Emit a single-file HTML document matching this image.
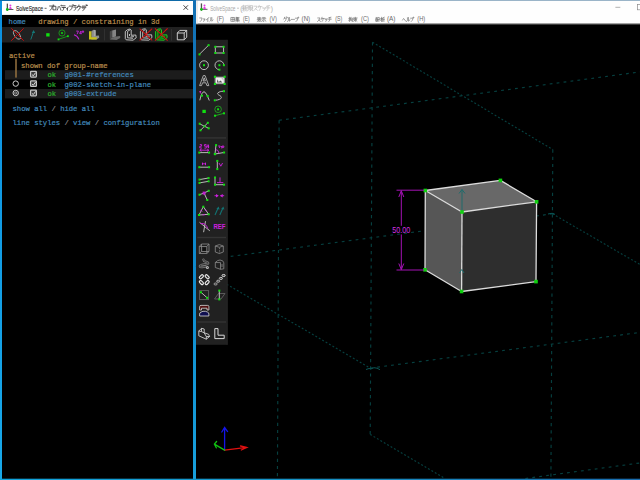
<!DOCTYPE html>
<html><head><meta charset="utf-8">
<style>
html,body{margin:0;padding:0;width:640px;height:480px;overflow:hidden;background:#000;}
body{position:relative;font-family:"Liberation Sans",sans-serif;}
.a{position:absolute;}
svg{position:absolute;left:0;top:0;}
</style></head><body>
<svg width="640" height="480" viewBox="0 0 640 480">
<defs>
<linearGradient id="bstrip" x1="0" y1="0" x2="0" y2="1">
  <stop offset="0" stop-color="#1370b4"/><stop offset="0.5" stop-color="#0d88cc"/><stop offset="1" stop-color="#18a0dc"/>
</linearGradient>
<linearGradient id="lstrip" x1="0" y1="0" x2="0" y2="1">
  <stop offset="0" stop-color="#0c90e0"/><stop offset="1" stop-color="#18a8e8"/>
</linearGradient>
<linearGradient id="botstrip" x1="0" y1="0" x2="1" y2="0">
  <stop offset="0" stop-color="#12a4dc"/><stop offset="0.5" stop-color="#1890c2"/><stop offset="1" stop-color="#1a6cae"/>
</linearGradient>
</defs>
<!-- ============ window chrome ============ -->
<rect x="0" y="0" width="640" height="480" fill="#000"/>
<rect x="0" y="0" width="2" height="480" fill="url(#lstrip)"/>
<rect x="0" y="0" width="193" height="1" fill="#0e6aa8"/>
<rect x="2" y="1" width="191" height="13" fill="#fff"/>
<rect x="2" y="14" width="191" height="1" fill="#e8e8e8"/>
<rect x="193" y="0" width="3" height="480" fill="url(#bstrip)"/>
<rect x="196" y="0" width="444" height="1" fill="#9ab4c8"/>
<rect x="196" y="1" width="444" height="22.5" fill="#fefefe"/>
<rect x="196" y="1" width="2" height="22.5" fill="#ececec"/>
<rect x="196" y="23.5" width="444" height="0.8" fill="#c8c8c8"/>

<!-- left title -->
<g id="ssicon">
  <rect x="6.7" y="3.6" width="1.3" height="7.3" fill="#505050"/>
  <rect x="7" y="9" width="6.4" height="1" fill="#585858"/>
  <circle cx="10.4" cy="5.6" r="1" fill="#e040e0"/>
  <path d="M9.1 9.1 L9.6 7.3 Q10.4 6.3 11.2 7.3 L11.8 9.1 Z" fill="#e040e0"/>
  <circle cx="7.35" cy="9.5" r="1.4" fill="#10c010"/>
</g>
<text x="16" y="10.9" font-family="Liberation Sans" font-size="6.8" fill="#202020" stroke="#202020" stroke-width="0.12" textLength="27" lengthAdjust="spacingAndGlyphs">SolveSpace</text>
<path d="M44.6 8.3 H46.6" stroke="#404040" stroke-width="0.8"/>
<g stroke="#303030" stroke-width="0.8" fill="none" stroke-linecap="round">
  <path d="M49.6 6 H52.4 Q52 8.8 50.2 10.4"/><circle cx="53.2" cy="5.3" r="0.6" stroke-width="0.5"/>
  <path d="M53.3 6.3 H55.9 V9.9 H53.3 Z"/>
  <path d="M58.3 6.6 Q58 9 57.2 10.3 M59.6 6.6 Q60.5 8.5 61 10.3"/><circle cx="61.3" cy="5.6" r="0.6" stroke-width="0.5"/>
  <path d="M62.6 5.8 H65.1 M62 7.5 H65.6 M63.9 7.5 Q63.9 9.5 62.8 10.5"/>
  <path d="M68.3 7.3 L66.3 9 M67.5 8.3 V10.4"/>
  <path d="M69.4 6.1 H72.5 Q72.2 9 70.1 10.4 M72.6 4.9 l0.4 0.8 M73.5 4.8 l0.4 0.8"/>
  <path d="M74.1 5.6 H76 M73.8 7.1 H76.3 Q76 9.3 74.3 10.5"/>
  <path d="M78.9 5 V6 M77.4 7.6 V6.4 H80.5 Q80.3 9.3 78 10.5"/>
  <path d="M81.5 7.1 H86 M83 5.6 V8.6 M85 5.6 V8 Q84.8 9.6 82.8 10.5 M86.2 4.9 l0.4 0.8 M87 4.8 l0.4 0.8"/>
</g>
<path d="M183.5 5.3 L188 9.8 M188 5.3 L183.5 9.8" stroke="#303030" stroke-width="0.9"/>

<!-- right title -->
<use href="#ssicon" transform="translate(194.1,-0.2)"/>
<text x="210.2" y="10.6" font-family="Liberation Sans" font-size="6.6" fill="#a8a8a8" textLength="25.3" lengthAdjust="spacingAndGlyphs">SolveSpace</text>
<path d="M237 8.2 H239" stroke="#b0b0b0" stroke-width="0.7"/>
<text x="240.3" y="10.8" font-family="Liberation Sans" font-size="6.6" fill="#a8a8a8">(</text>
<text x="270.8" y="10.8" font-family="Liberation Sans" font-size="6.6" fill="#a8a8a8">)</text>
<g stroke="#b4b4b4" stroke-width="0.6" fill="none" stroke-linecap="round">
  <path d="M242.3 6 H245 M243.6 5.2 V6 M242.5 7.2 H244.8 M242.2 8.5 H245 M243.6 7.2 V11 M243.5 9 L242.3 10.5 M243.7 9 L244.9 10.3 M245.6 6 L247.5 5.4 M245.6 6 V8 Q245.6 10 245 11 M245.6 7.8 H247.6 M246.8 7.8 V11"/>
  <path d="M247.9 6.3 H250 M247.9 7.8 H250 M249 5.2 V8 Q248.8 9.8 247.8 10.8 M249.2 8.8 L250.2 10.3 M250.5 5.6 H252.6 V9 H250.5 Z M250.5 7.3 H252.6 M251 9 Q251 10.3 250.2 11 M252 9 V10.6 H253"/>
  <path d="M254 6.2 H257.2 Q256.6 8.5 254 10.4 M255.8 8.7 L257.5 10.4"/>
  <path d="M259.3 5.3 L258.2 7.6 M258.8 6.6 H262 M260.6 6.6 Q260.6 9.2 259.3 10.6"/>
  <path d="M262.8 7.7 L263.2 8.7 M263.9 7.5 L264.3 8.5 M265.5 7.5 Q265.2 9.5 263.8 10.6"/>
  <path d="M266.4 6.3 L269.6 5.6 M266 7.9 H270 M268 6 V8.5 Q268 10 266.8 10.8"/>
</g>
<path d="M615.4 7.3 H620.3" stroke="#7c7c7c" stroke-width="0.6"/>
<rect x="637.4" y="4.6" width="5" height="5.2" fill="none" stroke="#8a8a8a" stroke-width="0.7"/>

<!-- menu -->
<g font-family="Liberation Sans" font-size="6.3" fill="#6a6a6a">
  <text x="216.8" y="21.3" textLength="7.1" lengthAdjust="spacingAndGlyphs">(F)</text>
  <text x="243.0" y="21.3" textLength="6.6" lengthAdjust="spacingAndGlyphs">(E)</text>
  <text x="269.5" y="21.3" textLength="7.4" lengthAdjust="spacingAndGlyphs">(V)</text>
  <text x="301.6" y="21.3" textLength="8.6" lengthAdjust="spacingAndGlyphs">(N)</text>
  <text x="335.2" y="21.3" textLength="7.0" lengthAdjust="spacingAndGlyphs">(S)</text>
  <text x="361.0" y="21.3" textLength="7.9" lengthAdjust="spacingAndGlyphs">(C)</text>
  <text x="386.9" y="21.3" textLength="8.6" lengthAdjust="spacingAndGlyphs">(A)</text>
  <text x="417.3" y="21.3" textLength="7.9" lengthAdjust="spacingAndGlyphs">(H)</text>
</g>
<g stroke="#787878" stroke-width="0.68" fill="none" stroke-linecap="round">
  <path d="M 199.63 17.96 H 202.12 Q 201.95 20.36 200.29 21.56"/>
  <path d="M 203.31 18.92 H 205.11 Q 204.97 19.88 204.56 20.12 M 204.28 19.64 Q 204.28 21.08 203.73 21.56"/>
  <path d="M 208.87 17.48 Q 207.82 19.16 206.25 19.88 M 207.82 18.92 V 21.56"/>
  <path d="M 210.75 17.72 V 19.88 Q 210.75 21.08 209.87 21.56 M 211.80 17.48 V 21.32 Q 212.50 20.84 213.02 19.88"/>
  <path d="M 231.22 17.48 H 234.61 V 21.32 H 231.22 Z M 232.92 17.48 V 21.32 M 231.22 19.40 H 234.61"/>
  <path d="M 236.25 17.24 V 19.88 M 236.25 17.48 H 239.00 M 236.25 18.44 H 238.79 M 236.25 19.40 H 238.79 M 237.52 17.48 V 19.40 M 235.61 20.36 H 239.42 M 237.52 19.88 V 21.80 M 237.30 20.60 L 235.82 21.56 M 237.73 20.60 L 239.21 21.56"/>
  <path d="M 257.43 17.72 H 260.89 M 257.65 18.68 H 260.68 M 257.22 19.64 H 261.11 M 259.16 17.24 V 19.64 M 259.16 19.64 Q 258.30 21.08 257.22 21.56 M 258.73 20.36 V 21.56 L 260.24 21.08 M 259.59 19.88 L 261.11 21.56"/>
  <path d="M 262.56 17.48 H 265.16 M 261.92 18.68 H 265.81 M 263.86 18.68 V 21.56 L 263.21 21.32 M 262.78 19.88 L 261.92 21.32 M 264.94 19.88 L 265.81 21.32"/>
  <path d="M 284.65 17.24 Q 284.30 18.68 283.77 19.16 M 284.47 18.20 H 286.40 Q 286.05 20.60 284.65 21.56 M 286.57 17.00 L 286.92 17.72 M 286.99 17.00 L 287.27 17.58"/>
  <path d="M 288.45 17.72 V 19.88 Q 288.45 21.08 287.57 21.56 M 289.50 17.48 V 21.32 Q 290.20 20.84 290.72 19.88"/>
  <path d="M 291.37 19.40 H 294.52"/>
  <path d="M 295.35 18.20 H 297.80 Q 297.62 20.36 296.05 21.56 M 298.32 17.58 m -0.42 0.00 a 0.42 0.58 0 1 0 0.84 0.00 a 0.42 0.58 0 1 0 -0.84 0.00"/>
  <path d="M 317.72 17.96 H 320.00 Q 319.30 20.36 317.55 21.56 M 319.12 19.88 L 320.35 21.56"/>
  <path d="M 322.05 17.24 Q 321.70 18.92 321.17 19.64 M 321.87 18.44 H 324.32 M 323.27 18.44 Q 323.10 20.60 322.05 21.56"/>
  <path d="M 325.09 18.92 L 325.39 19.88 M 325.98 18.68 L 326.27 19.64 M 327.16 18.68 Q 326.86 20.84 325.83 21.56"/>
  <path d="M 328.70 17.72 L 330.97 17.24 M 328.17 19.16 H 331.32 M 329.75 17.48 V 19.64 Q 329.57 21.08 328.87 21.56"/>
  <path d="M 349.45 17.24 V 21.56 M 348.81 18.68 H 350.29 M 348.81 20.36 L 350.29 19.64 M 350.93 17.24 L 350.50 18.68 M 350.72 18.20 H 352.62 V 21.56 L 351.99 21.32 M 350.93 19.40 H 351.77 V 20.60 H 350.93 Z"/>
  <path d="M 353.41 17.96 H 357.22 M 354.05 18.68 H 356.59 V 19.88 H 354.05 Z M 355.32 17.24 V 21.56 M 355.10 19.88 L 353.62 21.32 M 355.53 19.88 L 357.01 21.32"/>
  <path d="M 376.11 17.48 H 377.17 M 376.11 18.44 H 377.59 V 21.32 H 376.11 Z M 376.11 19.88 H 377.59 M 376.83 18.44 V 21.32 M 378.02 17.48 H 379.29 V 18.68 M 377.80 19.64 H 379.92 M 378.86 19.16 V 21.56"/>
  <path d="M 381.56 17.24 V 21.56 M 380.71 18.44 H 382.40 M 381.56 18.92 L 380.71 20.60 M 381.56 18.92 L 382.40 20.12 M 384.31 17.24 L 382.83 17.72 V 19.40 Q 382.83 20.84 382.40 21.56 M 382.83 19.16 H 384.52 M 383.89 19.16 V 21.56"/>
  <path d="M 402.50 20.12 L 403.58 18.44 L 405.91 21.32"/>
  <path d="M 407.45 17.72 V 19.88 Q 407.45 21.08 406.57 21.56 M 408.50 17.48 V 21.32 Q 409.20 20.84 409.72 19.88"/>
  <path d="M 410.55 18.20 H 413.00 Q 412.82 20.36 411.25 21.56 M 413.52 17.58 m -0.42 0.00 a 0.42 0.58 0 1 0 0.84 0.00 a 0.42 0.58 0 1 0 -0.84 0.00"/>
</g>

<!-- ============ 3D viewport ============ -->
<g stroke="#063f3f" stroke-width="1.15" fill="none">
  <g stroke-dasharray="3.2 4">
    <path d="M372.5 42.2 L370.2 434.4"/>
    <path d="M552.8 149.5 L550.9 480"/>
    <path d="M279.1 120.3 L277.4 480"/>
  </g>
  <g stroke-dasharray="2.8 4.2">
    <path d="M279.1 120.3 L647 71"/>
    <path d="M525.4 478.5 L647 462"/>
    <path d="M196 261 L552.5 213.8"/>
    <path d="M370.3 368.1 L647 331.5"/>
  </g>
  <g stroke-dasharray="1.9 2.05">
    <path d="M372.5 42.2 L552.8 149.5"/>
    <path d="M370.2 434.4 L445 478.5"/>
    <path d="M196 266.4 L370.3 368.1"/>
    <path d="M552.5 213.8 L647 268.6"/>
  </g>
</g>
<path d="M366 369.5 l3 -1 l2 0.4 l3 -1.2 l3 0.5 l3 1.5" stroke="#0a5656" stroke-width="1" fill="none"/>
<path d="M548 214 l3 -0.6 l2 0 l2 1" stroke="#0a5656" stroke-width="1" fill="none"/>

<!-- cube -->
<g stroke-linejoin="round">
  <path d="M425.3 190.5 L500.4 180.4 L536.6 201.8 L462 212 Z" fill="#686868"/>
  <path d="M425.3 190.5 L462 212 L461.6 291.5 L425 269.8 Z" fill="#565656"/>
  <path d="M462 212 L536.6 201.8 L536 281.6 L461.6 291.5 Z" fill="#2e2e2e"/>
  <g stroke="#dcdcdc" stroke-width="1.3" fill="none">
    <path d="M425.3 190.5 L500.4 180.4 L536.6 201.8 L462 212 Z"/>
    <path d="M425.3 190.5 L425 269.8 L461.6 291.5 L536 281.6 L536.6 201.8"/>
    <path d="M462 212 L461.6 291.5"/>
  </g>
</g>
<!-- teal normal arrows -->
<g stroke="#176c6c" stroke-width="0.9" fill="none">
  <path d="M462 211 V189.5 M459 193.5 L462 189.5 L465 193.5"/>
  <path d="M459.5 273 L461.8 269.5 L464 273"/>
</g>
<!-- vertices -->
<g fill="#10d010">
  <rect x="423.5" y="188.7" width="3.6" height="3.6"/>
  <rect x="498.6" y="178.6" width="3.6" height="3.6"/>
  <rect x="534.8" y="200" width="3.6" height="3.6"/>
  <rect x="460.2" y="210.2" width="3.6" height="3.6"/>
  <rect x="423.2" y="268" width="3.6" height="3.6"/>
  <rect x="459.8" y="289.7" width="3.6" height="3.6"/>
  <rect x="534.2" y="279.8" width="3.6" height="3.6"/>
</g>
<!-- dimension -->
<g stroke="#a412b4" stroke-width="1" fill="none">
  <path d="M396.5 190.2 H424 M396.5 270 H424"/>
  <path d="M401.3 190.5 V225.8 M401.3 234.4 V269.8"/>
  <path d="M398.8 197 L401.3 190.8 L403.8 197 M398.8 263.5 L401.3 269.6 L403.8 263.5"/>
</g>
<text x="392.2" y="233.4" font-family="Liberation Sans" font-size="8.2" fill="#d030e0" textLength="18" lengthAdjust="spacingAndGlyphs">50.00</text>

<!-- axis triad -->
<g stroke-width="1.3" fill="none" stroke-linecap="round">
  <path d="M224.6 450.1 V427.5 M221.8 432 L224.6 427.5 L227.6 431.6" stroke="#1414e8"/>
  <path d="M224.6 450.1 L246.8 447.4 M240.5 446 L246.8 447.4 L241.3 450" stroke="#e01010"/>
  <path d="M224.6 450.1 L214.4 444.1 M216.6 441.5 L214.4 444.1 L216.3 447.8" stroke="#10c010"/>
</g>


<!-- right toolbar -->
<g id="rtb">
  <rect x="196" y="39.8" width="31.6" height="305" fill="#212121"/>
  <rect x="226.6" y="39.8" width="1" height="305" fill="#262626"/>
  <g fill="#343434"><rect x="197.4" y="137.2" width="28.6" height="1.4"/><rect x="197.4" y="236.8" width="28.6" height="1.4"/><rect x="197.4" y="321.3" width="28.6" height="1.4"/></g>
  <g stroke="#c8c8c8" stroke-width="0.9" fill="none">
    <path d="M199.4 54.3 L208.6 45.2"/>
    <rect x="215.3" y="46.8" width="8.3" height="6.2"/>
    <circle cx="204" cy="65.2" r="4.4"/>
    <path d="M223.8 65.2 A4.4 4.4 0 1 0 219.4 69.6"/>
    <path d="M199.6 85.6 L203.3 75.6 L205.1 75.6 L208.8 85.6 L206.9 85.6 L205.9 82.8 L202.5 82.8 L201.5 85.6 Z M203 81 L204.2 77.8 L205.4 81 Z" stroke-width="0.8"/>
    <path d="M199.8 100.3 Q201.5 93 203 92.2 Q204 91.4 205 92.2 Q206.8 93.5 209.3 100.5"/>
    <path d="M215.5 100.2 C219 100 222.5 98.5 221 96.5 C219.5 95 216.5 94.5 218 92.8 C219 91.8 221.5 91.3 223.2 91.2"/>
    <path d="M199.5 123.8 L208.7 128.3 M200.5 130.3 L207.8 122.8"/>
    <path d="M199.3 152.6 H209"/>
    <path d="M215 154 L216 145 M215 154 L224 152.5"/>
    <path d="M199.3 167.2 H209"/>
    <path d="M217.3 160.8 V169"/>
    <path d="M199.5 179.6 L208.5 178 M199.5 182.9 L208.5 181.3"/>
    <path d="M215 177.5 V184.7 H224"/>
    <path d="M204 193 L199.5 194.7 M204 193 L208.7 190.8 M204 193 L207.3 200"/>
    <path d="M203.3 206.7 L199 215 L208.7 214.3 Z"/>
    <path d="M199.5 222.3 L209.8 230.8 M205.5 221.2 L203.6 232.2"/>
  </g>
  <rect x="214.6" y="76.6" width="10.4" height="7.6" fill="#8c8c8c"/>
  <rect x="215.8" y="77.6" width="8" height="5.6" fill="#f0f0f0"/>
  <path d="M216.8 82.6 L217.6 79.2 L218.6 82 L219.4 81.6 L220.2 80.6 L221.2 81.2 L222.4 82.6 Z" fill="#505050"/>
  <path d="M221.6 78.2 L223.2 79.4" stroke="#909090" stroke-width="0.7"/>
  <circle cx="218.1" cy="109.3" r="3.3" fill="none" stroke="#20a020" stroke-width="0.9"/>
  <path d="M215 115.7 L224 113.3" stroke="#20b020" stroke-width="0.9"/>
  <g fill="#10e010">
    <rect x="198.5" y="53.4" width="2" height="2"/><rect x="207.6" y="44.2" width="2" height="2"/>
    <rect x="214.3" y="45.8" width="2" height="2"/><rect x="222.6" y="45.8" width="2" height="2"/>
    <rect x="214.3" y="52" width="2" height="2"/><rect x="222.6" y="52" width="2" height="2"/>
    <rect x="203" y="64.2" width="2" height="2"/>
    <rect x="218.4" y="64.2" width="2" height="2"/><rect x="222.9" y="64.2" width="2" height="2"/><rect x="218.4" y="68.7" width="2" height="2"/>
    <rect x="213.9" y="75.7" width="2.1" height="2.1"/><rect x="223.6" y="75.7" width="2.1" height="2.1"/>
    <rect x="213.9" y="82.9" width="2.1" height="2.1"/><rect x="223.6" y="82.9" width="2.1" height="2.1"/>
    <rect x="201" y="94.6" width="2" height="2"/><rect x="206.6" y="95" width="2" height="2"/>
    <rect x="213.8" y="99.3" width="2" height="2"/><rect x="223" y="90.2" width="2" height="2"/>
    <rect x="202.4" y="109.8" width="3.4" height="3.2"/>
    <rect x="217.1" y="108.3" width="2" height="2"/>
    <rect x="214" y="114.7" width="2" height="2"/><rect x="223" y="112.3" width="2" height="2"/>
    <rect x="198.7" y="122.7" width="2" height="2"/><rect x="207.7" y="127.3" width="2" height="2"/>
    <rect x="199.5" y="129.3" width="2" height="2"/><rect x="206.8" y="121.8" width="2" height="2"/>
    <rect x="203.5" y="125.3" width="2" height="2"/>
    <rect x="198.3" y="151.6" width="2" height="2"/><rect x="208.1" y="151.6" width="2" height="2"/>
    <rect x="215.1" y="144.1" width="2" height="2"/><rect x="213.8" y="153" width="2.2" height="2.2"/><rect x="223.1" y="151.5" width="2" height="2"/>
    <rect x="198.3" y="166.2" width="2" height="2"/><rect x="208.1" y="166.2" width="2" height="2"/>
    <rect x="216.3" y="159.9" width="2" height="2"/><rect x="216.3" y="168.1" width="2" height="2"/>
    <rect x="198.5" y="178.6" width="2" height="2"/><rect x="207.6" y="177.1" width="2" height="2"/>
    <rect x="198.5" y="181.9" width="2" height="2"/><rect x="207.6" y="180.3" width="2" height="2"/>
    <rect x="214" y="176.5" width="2" height="2"/><rect x="214" y="183.7" width="2" height="2"/><rect x="223.1" y="183.7" width="2" height="2"/>
    <rect x="198.5" y="193.7" width="2" height="2"/><rect x="207.7" y="189.8" width="2" height="2"/><rect x="206.3" y="199" width="2" height="2"/>
    <rect x="202.3" y="205.7" width="2" height="2"/><rect x="198" y="214" width="2" height="2"/><rect x="207.7" y="213.3" width="2" height="2"/>
  </g>
  <path d="M199.2 91 L201.4 91 L200.2 94 Z" fill="#d020e0"/>
  <rect x="202.6" y="191.6" width="3" height="3" fill="#c020d0"/>
  <g stroke="#d020e0" stroke-width="0.9" fill="none">
    <path d="M199.8 144.6 h1.8 v1.6 h-1.8 v1.8 h2 M204.4 144.6 h1.9 M204.4 144.6 v1.5 h1.9 v2 h-1.9 M207.2 144.6 v2.3 h2 M208.5 144.6 v3.6"/>
    <path d="M199.8 150.2 H208.8 M201.5 149 L199.8 150.2 L201.5 151.4 M207.1 149 L208.8 150.2 L207.1 151.4"/>
    <path d="M215.5 149.5 Q218.5 149.5 219 153.3 M218.2 146 h2 l-1 2 M220.8 147 l1-1 v2.5 M222.2 146 h1.6 v1.4 h-1.6z"/>
    <path d="M219 163 L220.8 166.2 L222.6 163"/>
    <path d="M220 177.4 V182.6 M217 182.6 H223.3"/>
    <path d="M214.5 195.7 H217.5 M220.5 195.7 H224.2"/>
    <path d="M200.6 210 L202.2 211.6 M205 209.6 L206.5 211.2 M202.6 214.9 L205 214.6"/>
    <path d="M200.5 223.5 Q206 222.8 207.8 228.5"/>
  </g>
  <path d="M202 162.2 L204 163.8 L206 162.2 V165.4 L204 163.8 L202 165.4 Z" fill="#d020e0"/>
  <path d="M216 193.9 L218.8 195.7 L216 197.5 Z M222.7 193.9 L219.9 195.7 L222.7 197.5 Z" fill="#d020e0"/>
  <text x="213.5" y="229" font-family="Liberation Sans" font-weight="bold" font-size="6.8" fill="#d020e0" textLength="11.8" lengthAdjust="spacingAndGlyphs">REF</text>
  <g stroke="#127272" stroke-width="1.1" fill="none">
    <path d="M215 215 L218 208.3 M219.8 215 L222.8 208.3"/>
  </g>
  <path d="M218.6 206.4 L216.3 209 L219.6 209.4 Z M223.4 206.4 L221.1 209 L224.4 209.4 Z" fill="#127272"/>
  <g stroke="#8c8c8c" stroke-width="0.8" fill="none">
    <path d="M199.3 246.5 L201.5 244 H209 V251.5 L206.8 253.5 H199.3 Z M201.5 244 V251.5 H209 M201.5 251.5 L199.3 253.5 M199.3 246.5 H206.8 V253.5 M206.8 246.5 L209 244"/>
    <path d="M215.3 246 Q219.3 243.2 223.3 246 V252 Q219.3 255 215.3 252 Z M215.3 246 Q219.3 248.6 223.3 246 M219.6 247.8 v1.3 M219.6 250.3 v1.3 M219.6 252.6 v0.8"/>

    <path d="M215.3 262.5 Q217.5 260 220 260 Q223.5 260.3 223.8 262.8 V268.8 L220.5 269.3 V262.6 L215.3 262.5 V267.5 L220.5 269.3 M222 264 V267"/>
  </g>
  <path d="M203.4 259.6 Q203.6 261.2 205.6 261.7 L207.8 262.5 Q208.8 263.5 207.3 264 L201.6 265 Q199.6 265.6 199.9 266.5 Q200.3 267.4 202.2 267 L205.3 266.5" stroke="#7c7c7c" stroke-width="2.3" fill="none" stroke-linecap="round" stroke-linejoin="round"/>
  <path d="M203.4 259.6 Q203.6 261.2 205.6 261.7 L207.8 262.5 Q208.8 263.5 207.3 264 L201.6 265 Q199.6 265.6 199.9 266.5 Q200.3 267.4 202.2 267 L205.3 266.5" stroke="#242424" stroke-width="0.8" fill="none" stroke-linecap="round" stroke-linejoin="round"/>
  <circle cx="207.4" cy="267.6" r="1.5" fill="#b8b8b8"/><circle cx="207.4" cy="267.6" r="0.5" fill="#404040"/>
  <rect x="203" y="247.6" width="3" height="3.2" fill="#101010"/>
  <g stroke="#e8e8e8" stroke-width="1.2" fill="#2a2a2a">
    <rect x="199.1" y="275.5" width="4.6" height="2.5" rx="1.2" transform="rotate(-45 201.4 276.75)"/>
    <rect x="204.85" y="275.5" width="4.6" height="2.5" rx="1.2" transform="rotate(45 207.15 276.75)"/>
    <rect x="199.1" y="281.3" width="4.6" height="2.5" rx="1.2" transform="rotate(45 201.4 282.55)"/>
    <rect x="204.85" y="281.3" width="4.6" height="2.5" rx="1.2" transform="rotate(-45 207.15 282.55)"/>
  </g>
  <g stroke="#d8d8d8" stroke-width="1" fill="#404040">
    <ellipse cx="215.6" cy="284" rx="1.6" ry="1.05" stroke="#9a9a9a"/><ellipse cx="218.2" cy="281.2" rx="1.6" ry="1.05" stroke="#b0b0b0"/><ellipse cx="220.9" cy="278.4" rx="1.6" ry="1.05" stroke="#c8c8c8"/><ellipse cx="223.6" cy="275.5" rx="1.6" ry="1.05" stroke="#e0e0e0"/>
  </g>
  <g stroke="#d8d8d8" stroke-width="0.85" fill="none">
    <path d="M214.8 328.6 H218 V335.2 H224.2 V338.6 H214.8 Z" stroke-width="1"/>
    <path d="M198.8 331 L201.5 328.3 L204.2 329 V332.8 L208.6 334.3 L209.6 336.5 L206.3 339.2 L198.8 335.8 Z M201.5 328.3 V331.6 L204.2 332.8 M198.8 331 L201.5 331.6 M206.3 336.5 V339.2 M206.3 336.5 L209.6 336.5 M204.2 332.8 L206.3 336.5"/>
  </g>
  <g stroke="#606060" stroke-width="0.9" fill="none">
    <rect x="199.6" y="290.6" width="9" height="9"/>
    <path d="M214.5 299 L218.5 293.5 H225 L221 299 Z"/>
  </g>
  <path d="M201 292.3 L207.1 297.8" stroke="#c8c8c8" stroke-width="0.9"/>
  <path d="M219.3 290.6 V299.4" stroke="#c0c0c0" stroke-width="1"/>
  <g fill="#10e010">
    <rect x="200" y="291.3" width="2" height="2"/><rect x="206.1" y="296.8" width="2" height="2"/>
    <rect x="218.3" y="289.6" width="2" height="2"/><rect x="218.3" y="298.4" width="2" height="2"/>
  </g>
  <path d="M199.6 310 V306.6 Q199.6 305.4 201 305.4 H207.5 Q208.9 305.4 208.9 306.6 V310 H207 V308.2 H201.5 V310 Z" fill="#501010" stroke="#d8d8d8" stroke-width="0.8"/>
  <path d="M199.6 316 V314 Q199.6 312.6 201 312.1 L203 311.3 H205.5 L207.5 312.1 Q208.9 312.6 208.9 314 V316 Z" fill="#101050" stroke="#d8d8d8" stroke-width="0.8"/>
</g>
<!-- ============ left text window ============ -->
<rect x="2" y="27" width="191" height="15.5" fill="#212121"/>
<rect x="5" y="70.2" width="188" height="9.4" fill="#1c1c1c"/>
<rect x="5" y="89" width="188" height="9.4" fill="#1c1c1c"/>

<g font-family="Liberation Mono" font-size="8" style="white-space:pre" xml:space="preserve">
  <text x="8.6" y="24" fill="#4288ba" stroke="#4288ba" stroke-width="0.22" textLength="17.32" lengthAdjust="spacingAndGlyphs">home</text>
  <text x="38.3" y="24" fill="#b88c4c" stroke="#b88c4c" stroke-width="0.22" textLength="121.24" lengthAdjust="spacingAndGlyphs">drawing / constraining in 3d</text>
  <text x="8.9" y="57.8" fill="#b88c4c" stroke="#b88c4c" stroke-width="0.22" textLength="25.98" lengthAdjust="spacingAndGlyphs">active</text>
  <text x="21" y="67.5" fill="#b88c4c" stroke="#b88c4c" stroke-width="0.22" textLength="86.60" lengthAdjust="spacingAndGlyphs">shown dof group-name</text>
  <text x="47.5" y="77.2" fill="#2cae2c" stroke="#2cae2c" stroke-width="0.22" textLength="8.66" lengthAdjust="spacingAndGlyphs">ok</text>
  <text x="64.5" y="77.2" fill="#4288ba" stroke="#4288ba" stroke-width="0.22" textLength="69.28" lengthAdjust="spacingAndGlyphs">g001-#references</text>
  <text x="47.5" y="86.6" fill="#2cae2c" stroke="#2cae2c" stroke-width="0.22" textLength="8.66" lengthAdjust="spacingAndGlyphs">ok</text>
  <text x="64.5" y="86.6" fill="#4288ba" stroke="#4288ba" stroke-width="0.22" textLength="86.60" lengthAdjust="spacingAndGlyphs">g002-sketch-in-plane</text>
  <text x="47.5" y="96" fill="#2cae2c" stroke="#2cae2c" stroke-width="0.22" textLength="8.66" lengthAdjust="spacingAndGlyphs">ok</text>
  <text x="64.5" y="96" fill="#4288ba" stroke="#4288ba" stroke-width="0.22" textLength="51.96" lengthAdjust="spacingAndGlyphs">g003-extrude</text>
  <text x="12.5" y="110.5" fill="#4288ba" stroke="#4288ba" stroke-width="0.22" textLength="82.27" lengthAdjust="spacingAndGlyphs">show all&#160;&#160;&#160;hide all</text>
  <text x="51.47" y="110.5" fill="#8a8a8a" stroke="#8a8a8a" stroke-width="0.22" textLength="4.33" lengthAdjust="spacingAndGlyphs">/</text>
  <text x="12.5" y="124.5" fill="#4288ba" stroke="#4288ba" stroke-width="0.22" textLength="147.22" lengthAdjust="spacingAndGlyphs">line styles&#160;&#160;&#160;view&#160;&#160;&#160;configuration</text>
  <text x="64.46" y="124.5" fill="#8a8a8a" stroke="#8a8a8a" stroke-width="0.22" textLength="4.33" lengthAdjust="spacingAndGlyphs">/</text>
  <text x="94.77" y="124.5" fill="#8a8a8a" stroke="#8a8a8a" stroke-width="0.22" textLength="4.33" lengthAdjust="spacingAndGlyphs">/</text>
</g>

<!-- left toolbar icons -->
<g id="ltb">
  <ellipse cx="17" cy="34.9" rx="5" ry="2.5" transform="rotate(56 17 34.9)" fill="none" stroke="#a8a8a8" stroke-width="0.9"/>
  <path d="M11.3 28.3 L23.7 40.7 M23.7 28.3 L11.3 40.7" stroke="#c80c0c" stroke-width="1"/>
  <path d="M30.8 39.5 L33.3 32.3" stroke="#147878" stroke-width="1"/>
  <path d="M33.6 30 L31.8 33 L35.2 33 Z" fill="#147878"/>
  <rect x="46.2" y="33.2" width="3.4" height="3.3" fill="#10e010"/>
  <circle cx="62" cy="33" r="3.1" fill="none" stroke="#189818" stroke-width="0.9"/>
  <rect x="61.1" y="32.1" width="1.8" height="1.8" fill="#10d010"/>
  <path d="M58.5 39.3 L67.8 36.2" stroke="#18a818" stroke-width="0.85"/>
  <rect x="57.6" y="38.5" width="1.8" height="1.8" fill="#10e010"/>
  <rect x="67" y="35.3" width="1.8" height="1.8" fill="#10e010"/>
  <path d="M74 34.8 Q77.5 35.8 78.9 39.4" stroke="#c020d8" stroke-width="1.1" fill="none"/>
  <path d="M76.2 31.1 h2.2 l-1.3 3.1 M79.6 33.4 h2 M81 31 v3.3 M79.6 33.4 l1.4 -2.4 M82.3 31 h1.3 v1.3 h-1.3z" stroke="#c820e0" stroke-width="0.85" fill="none"/>
  <path d="M91.4 31.1 L93.8 29.7 L95.6 30.2 L95.6 35.8 L99 35.4 L99.2 37.8 L96.5 39.6 L91.4 39.6 Z" fill="#8c8c8c"/>
  <path d="M93.8 29.7 L95.6 30.2 L95.6 35.8 L93.8 36.4 Z" fill="#a8a8a8"/>
  <path d="M89 31.3 h2.4 v6 h5.3 v2.3 h-7.7 z" fill="#c8c018"/>
  <rect x="104" y="29" width="0.9" height="11.4" fill="#333"/>
  <path d="M109.8 31.5 L112.2 30.2 L112.2 37.5 L109.8 39.5 Z" fill="#484848"/>
  <path d="M112.2 30.4 L116 29.6 L116 36.4 L112.2 37.5 Z" fill="#858585"/>
  <path d="M112.2 37.5 L116 36.4 L120.2 35.9 L120.2 37.9 L116.5 40 L109.8 39.5 Z" fill="#6a6a6a"/>
  <g fill="none" stroke="#d8d8d8" stroke-width="0.85">
    <path d="M125.3 31.5 L127.6 29.6 L130 29 L131.2 30 L131.2 35.3 L135.8 35 L136.2 37.8 L133 40.2 L126.2 39.8 L125.3 38.6 Z"/>
    <path d="M127.6 31.3 V37.8 L133 38.3 M127.6 31.3 L130 29.8 M129.5 34 V36 M130.5 37 L134 36.6"/>
  </g>
  <g fill="none" stroke="#d8d8d8" stroke-width="0.85">
    <path d="M140.4 31.3 L142.7 29.2 L145.2 28.8 L146.3 29.8 L146.3 35 L151.6 34.8 L152 37.5 L148.8 40.2 L141.3 39.9 L140.4 38.6 Z"/>
    <path d="M142.7 31.3 V37.8 L148.6 38.3 M142.7 31.3 L145.2 29.7 M145.5 36.8 L149.5 36.5"/>
  </g>
  <path d="M155.6 31.3 L157.9 29.2 L160.4 28.8 L161.5 29.8 L161.5 35 L166.8 34.8 L167.2 37.5 L164 40.2 L156.5 39.9 L155.6 38.6 Z" fill="#0e4a0e" stroke="#22d822" stroke-width="0.9"/>
  <path d="M157.9 31.3 V37.8 L163.8 38.3 M157.9 31.3 L160.4 29.7 M160.7 36.8 L164.7 36.5" stroke="#22d822" stroke-width="0.8" fill="none"/>
  <path d="M139.6 28.6 L152.2 40.4 M152.2 28.6 L139.6 40.4 M155 28.4 L167.6 40.6 M167.6 28.4 L155 40.6" stroke="#d01010" stroke-width="1.05"/>
  <rect x="171" y="29" width="0.9" height="11.6" fill="#333"/>
  <g fill="none" stroke="#d8d8d8" stroke-width="0.9">
    <path d="M177.3 33 h6.9 v6.8 h-6.9 z M177.3 33 L179.8 30.4 H186.7 L184.2 33 M186.7 30.4 V37.2 L184.2 39.8"/>
  </g>
</g>
<!-- active bar -->
<rect x="15.3" y="58.6" width="1.4" height="19" fill="#a07a44"/>
<!-- checkboxes -->
<g stroke="#c4c4c4" stroke-width="1.25" fill="#3c3c3c">
  <rect x="30.6" y="71.4" width="5.8" height="5.6" rx="0.7"/>
  <rect x="30.6" y="80.8" width="5.8" height="5.6" rx="0.7"/>
  <rect x="30.6" y="90.2" width="5.8" height="5.6" rx="0.7"/>
</g>
<g stroke="#e8e8e8" stroke-width="0.9" fill="none">
  <path d="M32 74.6 L33.3 75.8 L35.6 72.6 M32 84 L33.3 85.2 L35.6 82 M32 93.4 L33.3 94.6 L35.6 91.4"/>
</g>
<g stroke="#cccccc" stroke-width="1" fill="none">
  <circle cx="15.7" cy="83.6" r="2.7"/>
  <circle cx="15.7" cy="93" r="2.7"/>
</g>
<circle cx="15.7" cy="93" r="1.1" fill="none" stroke="#bbbbbb" stroke-width="0.7"/>
<rect x="0" y="478.7" width="640" height="1.3" fill="url(#botstrip)"/>
</svg>
</body></html>
